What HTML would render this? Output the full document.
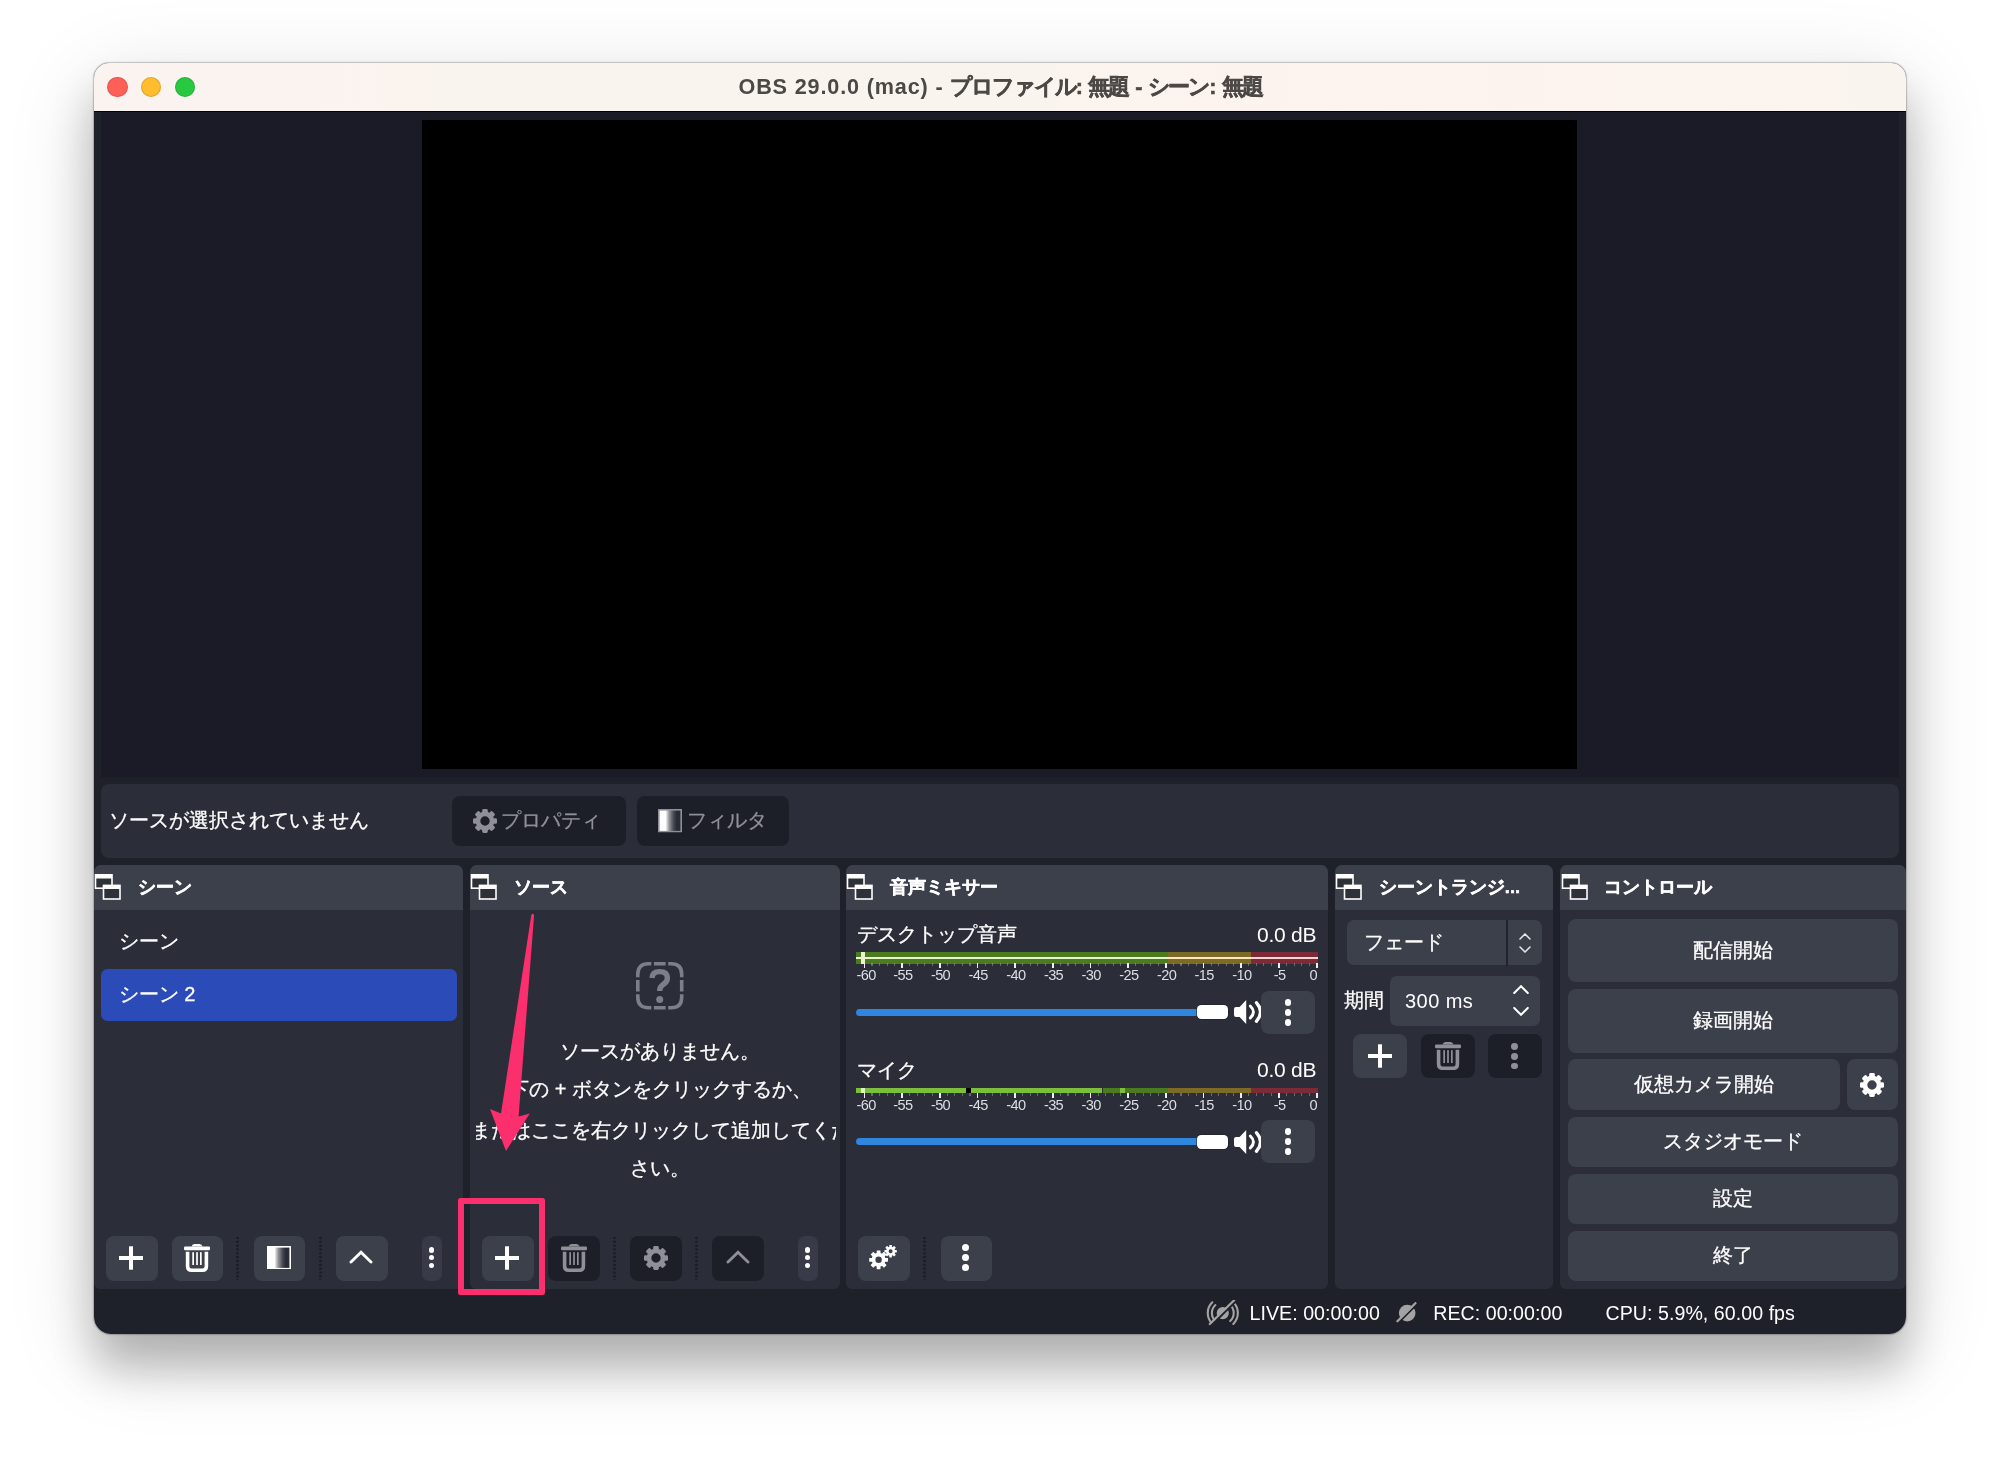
<!DOCTYPE html>
<html lang="ja">
<head>
<meta charset="utf-8">
<title>OBS 29.0.0 (mac)</title>
<style>
*{box-sizing:border-box;margin:0;padding:0}
html,body{width:2000px;height:1459px;overflow:hidden;background:#fff}
body{position:relative;font-family:"Liberation Sans",sans-serif;color:#fffeff;font-size:20px;line-height:1}
#shadow{position:absolute;left:94px;top:63px;width:1812px;height:1271px;border-radius:15px 15px 17px 17px;
 box-shadow:0 0 0 1px rgba(0,0,0,.13),0 0 3px rgba(0,0,0,.2),0 34px 44px 0 rgba(0,0,0,.24),0 20px 90px 0 rgba(0,0,0,.14)}
#win{position:absolute;left:94px;top:63px;width:1812px;height:1271px;border-radius:15px 15px 17px 17px;overflow:hidden;background:#1f212a;will-change:transform}
#c{position:absolute;left:-94px;top:-63px;width:2000px;height:1459px}
#c>*{position:absolute}
#c>div>div{position:absolute}
#titlebar{left:94px;top:63px;width:1812px;height:47.6px;background:linear-gradient(90deg,#fbf3f0,#f9f4ee 45%,#fdf3ef 70%,#faf4ef)}
#tline{left:94px;top:110.5px;width:1812px;height:1.5px;background:#000}
.tl{width:20.4px;height:20.4px;border-radius:50%;top:77px}
#title{left:94px;top:63px;width:1812px;height:47px;line-height:47px;text-align:center;color:#4b4846;font-weight:bold;font-size:21.6px;white-space:nowrap}
#preview{left:100.7px;top:112px;width:1798.6px;height:665.3px;background:#1a1b26}
#canvas{left:422px;top:119.5px;width:1155.4px;height:649.3px;background:#000}
#ctx{left:101px;top:784.3px;width:1798px;height:74.2px;border-radius:8px;background:#2b2e38}
.t{white-space:nowrap}
.btn{background:#3c404b;border-radius:8px}
.dis{background:#1c1e28;border-radius:8px}
.dock{background:#2b2e38;border-radius:7px 7px 6px 6px}
.dock .hd{left:0;top:0;right:0;height:45.2px;background:#3c404b;border-radius:7px 7px 0 0}
.dsep{top:1236.2px;width:3px;height:44px;background:radial-gradient(circle at 50% 50%,#1b1d26 0,#1b1d26 1.05px,transparent 1.55px) 0 0/3px 3.85px repeat-y}
</style>
</head>
<body>
<svg width="0" height="0" style="position:absolute"><symbol id="float" viewBox="0 0 28 27"><rect x="0.7" y="0" width="18.1" height="15" fill="#fff"/><rect x="2.3" y="4.5" width="14.9" height="8.9" fill="#2f3138"/><rect x="8.7" y="10.6" width="18.1" height="15.2" fill="#fff"/><rect x="10.3" y="15" width="14.9" height="9.2" fill="#2f3138"/></symbol><symbol id="plus" viewBox="0 0 24 24"><rect x="0" y="10" width="24" height="4" fill="currentColor"/><rect x="10" y="0.3" width="4" height="23.4" fill="currentColor"/></symbol><symbol id="trash" viewBox="0 0 26 28"><path d="M7.5 2.6 Q8 0 10.5 0 H15.5 Q18 0 18.5 2.6 Z" fill="currentColor"/><rect x="0" y="2.4" width="26" height="3.8" rx="1.2" fill="currentColor"/><path d="M3.6 7.8 V22.2 Q3.6 26.2 7.6 26.2 H18.4 Q22.4 26.2 22.4 22.2 V7.8" fill="none" stroke="currentColor" stroke-width="3.6"/><rect x="8.3" y="8.2" width="1.7" height="12.8" fill="currentColor"/><rect x="12.15" y="8.2" width="1.7" height="12.8" fill="currentColor"/><rect x="16" y="8.2" width="1.7" height="12.8" fill="currentColor"/></symbol><symbol id="filter" viewBox="0 0 24 23.5"><defs><linearGradient id="fg" x1="0" x2="1" y1="0" y2="0"><stop offset="0" stop-color="currentColor"/><stop offset="0.3" stop-color="currentColor"/><stop offset="0.46" stop-color="currentColor" stop-opacity="0.5"/><stop offset="0.66" stop-color="currentColor" stop-opacity="0.14"/><stop offset="0.8" stop-color="currentColor" stop-opacity="0"/></linearGradient></defs><rect x="0.8" y="0.8" width="22.4" height="21.9" fill="#2a2c35"/><rect x="0.8" y="0.8" width="22.4" height="21.9" fill="url(#fg)"/><rect x="0.8" y="0.8" width="22.4" height="21.9" fill="none" stroke="currentColor" stroke-width="1.6"/></symbol><symbol id="chev" viewBox="0 0 24 14"><path d="M2 12 L12 2.3 L22 12" fill="none" stroke="currentColor" stroke-width="2.9" stroke-linecap="round" stroke-linejoin="miter"/></symbol><symbol id="gear" viewBox="0 0 24 24"><circle cx="12" cy="12" r="7.05" fill="none" stroke="currentColor" stroke-width="4.70"/><rect x="9.20" y="0.00" width="5.6" height="3.80" rx="1.4" fill="currentColor" transform="rotate(0.0 12 12)"/><rect x="9.20" y="0.00" width="5.6" height="3.80" rx="1.4" fill="currentColor" transform="rotate(45.0 12 12)"/><rect x="9.20" y="0.00" width="5.6" height="3.80" rx="1.4" fill="currentColor" transform="rotate(90.0 12 12)"/><rect x="9.20" y="0.00" width="5.6" height="3.80" rx="1.4" fill="currentColor" transform="rotate(135.0 12 12)"/><rect x="9.20" y="0.00" width="5.6" height="3.80" rx="1.4" fill="currentColor" transform="rotate(180.0 12 12)"/><rect x="9.20" y="0.00" width="5.6" height="3.80" rx="1.4" fill="currentColor" transform="rotate(225.0 12 12)"/><rect x="9.20" y="0.00" width="5.6" height="3.80" rx="1.4" fill="currentColor" transform="rotate(270.0 12 12)"/><rect x="9.20" y="0.00" width="5.6" height="3.80" rx="1.4" fill="currentColor" transform="rotate(315.0 12 12)"/></symbol><symbol id="gears" viewBox="0 0 30 27"><circle cx="9.6" cy="16.8" r="5.10" fill="none" stroke="currentColor" stroke-width="3.80"/><rect x="7.70" y="7.40" width="3.8" height="3.60" rx="0.4" fill="currentColor" transform="rotate(0.0 9.6 16.8)"/><rect x="7.70" y="7.40" width="3.8" height="3.60" rx="0.4" fill="currentColor" transform="rotate(45.0 9.6 16.8)"/><rect x="7.70" y="7.40" width="3.8" height="3.60" rx="0.4" fill="currentColor" transform="rotate(90.0 9.6 16.8)"/><rect x="7.70" y="7.40" width="3.8" height="3.60" rx="0.4" fill="currentColor" transform="rotate(135.0 9.6 16.8)"/><rect x="7.70" y="7.40" width="3.8" height="3.60" rx="0.4" fill="currentColor" transform="rotate(180.0 9.6 16.8)"/><rect x="7.70" y="7.40" width="3.8" height="3.60" rx="0.4" fill="currentColor" transform="rotate(225.0 9.6 16.8)"/><rect x="7.70" y="7.40" width="3.8" height="3.60" rx="0.4" fill="currentColor" transform="rotate(270.0 9.6 16.8)"/><rect x="7.70" y="7.40" width="3.8" height="3.60" rx="0.4" fill="currentColor" transform="rotate(315.0 9.6 16.8)"/><circle cx="21.6" cy="8.2" r="3.25" fill="none" stroke="currentColor" stroke-width="2.50"/><rect x="20.30" y="2.00" width="2.6" height="2.90" rx="0.3" fill="currentColor" transform="rotate(0.0 21.6 8.2)"/><rect x="20.30" y="2.00" width="2.6" height="2.90" rx="0.3" fill="currentColor" transform="rotate(45.0 21.6 8.2)"/><rect x="20.30" y="2.00" width="2.6" height="2.90" rx="0.3" fill="currentColor" transform="rotate(90.0 21.6 8.2)"/><rect x="20.30" y="2.00" width="2.6" height="2.90" rx="0.3" fill="currentColor" transform="rotate(135.0 21.6 8.2)"/><rect x="20.30" y="2.00" width="2.6" height="2.90" rx="0.3" fill="currentColor" transform="rotate(180.0 21.6 8.2)"/><rect x="20.30" y="2.00" width="2.6" height="2.90" rx="0.3" fill="currentColor" transform="rotate(225.0 21.6 8.2)"/><rect x="20.30" y="2.00" width="2.6" height="2.90" rx="0.3" fill="currentColor" transform="rotate(270.0 21.6 8.2)"/><rect x="20.30" y="2.00" width="2.6" height="2.90" rx="0.3" fill="currentColor" transform="rotate(315.0 21.6 8.2)"/></symbol><symbol id="spk" viewBox="0 0 28 24"><path d="M2 7.1 H5.6 L12.2 0 V23.9 L5.6 16.9 H2 Q0 16.9 0 14.9 V9.1 Q0 7.1 2 7.1 Z" fill="currentColor"/><path d="M16.3 6 Q22.6 12 16.3 18" fill="none" stroke="currentColor" stroke-width="3" stroke-linecap="round"/><path d="M22.4 2.6 Q30.6 12 22.4 21.4" fill="none" stroke="currentColor" stroke-width="3.2" stroke-linecap="round"/></symbol><symbol id="qbox" viewBox="0 0 48 48"><path d="M1.8 15.3 V12.3 Q1.8 1.8 12.3 1.8 H15.3 M32.2 1.8 H35.2 Q45.7 1.8 45.7 12.3 V15.3 M45.7 32.2 V35.2 Q45.7 45.7 35.2 45.7 H32.2 M15.3 45.7 H12.3 Q1.8 45.7 1.8 35.2 V32.2 M17.9 1.8 H29.6 M17.9 45.7 H29.6 M1.8 17.9 V29.6 M45.7 17.9 V29.6" fill="none" stroke="currentColor" stroke-width="3.6"/><path d="M16 16 Q16.3 9.6 23.6 9.6 Q31.4 9.6 31.4 16 Q31.4 19.8 27.2 22.6 Q23.6 25 23.6 29" fill="none" stroke="currentColor" stroke-width="5.4" stroke-linecap="butt"/><circle cx="23.7" cy="37.4" r="3.5" fill="currentColor"/></symbol><symbol id="live" viewBox="0 0 34 26"><circle cx="16.8" cy="13.1" r="6.1" fill="currentColor"/><path d="M6.3 2.3 A15.1 15.1 0 0 0 6.3 23.9 M27.3 2.3 A15.1 15.1 0 0 1 27.3 23.9" fill="none" stroke="currentColor" stroke-width="2.1" stroke-linecap="round"/><path d="M9.4 5.1 A10.9 10.9 0 0 0 9.4 21.1 M24.2 5.1 A10.9 10.9 0 0 1 24.2 21.1" fill="none" stroke="currentColor" stroke-width="2.1" stroke-linecap="round"/><path d="M29.6 1.5 L5.2 25.3" stroke="#1f212a" stroke-width="2.2"/><path d="M28.2 0.2 L3.8 24" stroke="currentColor" stroke-width="2.2" stroke-linecap="round"/></symbol><symbol id="rec" viewBox="0 0 22 22"><circle cx="11.2" cy="11.1" r="8.3" fill="currentColor"/><path d="M20.6 2.6 L2.8 20.4" stroke="#1f212a" stroke-width="2" /><path d="M19.4 1.2 L1.4 19.2" stroke="currentColor" stroke-width="2.3" stroke-linecap="round"/></symbol><symbol id="cup" viewBox="0 0 12 7"><path d="M1 6 L6 1 L11 6" fill="none" stroke="currentColor" stroke-width="1.5" stroke-linecap="round"/></symbol><symbol id="cdn" viewBox="0 0 12 7"><path d="M1 1 L6 6 L11 1" fill="none" stroke="currentColor" stroke-width="1.5" stroke-linecap="round"/></symbol><symbol id="sup" viewBox="0 0 16 9"><path d="M1.2 8 L8 1.2 L14.8 8" fill="none" stroke="currentColor" stroke-width="2" stroke-linecap="round"/></symbol><symbol id="sdn" viewBox="0 0 16 9"><path d="M1.2 1 L8 7.8 L14.8 1" fill="none" stroke="currentColor" stroke-width="2" stroke-linecap="round"/></symbol></svg>
<div id="shadow"></div>
<div id="win"><div id="c">
<div id="titlebar"></div>
<div id="tline"></div>
<div class="tl" style="left:107.3px;background:#fe5f57;box-shadow:inset 0 0 0 1px rgba(0,0,0,.12)"></div>
<div class="tl" style="left:140.9px;background:#febc2e;box-shadow:inset 0 0 0 1px rgba(0,0,0,.12)"></div>
<div class="tl" style="left:174.5px;background:#28c840;box-shadow:inset 0 0 0 1px rgba(0,0,0,.12)"></div>
<div id="title" class="t"><span style="letter-spacing:0.85px">OBS 29.0.0 (mac) - </span><span style="letter-spacing:-2.1px;word-spacing:3.4px;-webkit-text-stroke:0.5px #4b4846">プロファイル: 無題 - シーン: 無題</span></div>
<div id="preview"></div>
<div id="canvas"></div>
<div id="ctx"></div>
<div class="t " style="top:805.0px;height:30.0px;line-height:30.0px;font-size:20px;left:109px;-webkit-text-stroke-width:0.3px;">ソースが選択されていません</div><div class="dis" style="left:451.8px;top:796.2px;width:174.0px;height:49.7px;"></div><svg style="left:473.2px;top:809.3px;color:#8f9097;" width="24" height="24" viewBox="0 0 24 24"><use href="#gear"/></svg><div class="t " style="top:805.0px;height:30.0px;line-height:30.0px;font-size:20px;color:#8f9097;left:501px;-webkit-text-stroke-width:0.3px;">プロパティ</div><div class="dis" style="left:637.0px;top:796.2px;width:152.2px;height:49.7px;"></div><svg style="left:658.0px;top:809.0px;color:#8f9097;" width="24" height="23.5" viewBox="0 0 24 23.5"><use href="#filter"/></svg><div class="t " style="top:805.0px;height:30.0px;line-height:30.0px;font-size:20px;color:#8f9097;left:686.5px;-webkit-text-stroke-width:0.3px;">フィルタ</div><div class="dock" style="left:94.0px;top:865.0px;width:369.4px;height:424.3px;"><div class="hd"></div></div><svg style="left:94.3px;top:873.5px;color:#fff;" width="28" height="27" viewBox="0 0 28 27"><use href="#float"/></svg><div class="t " style="top:873.2px;height:27.5px;line-height:27.5px;font-size:18.3px;font-weight:bold;left:138px;-webkit-text-stroke:0.45px #fffeff;">シーン</div><div class="dock" style="left:470.0px;top:865.0px;width:370.0px;height:424.3px;"><div class="hd"></div></div><svg style="left:470.3px;top:873.5px;color:#fff;" width="28" height="27" viewBox="0 0 28 27"><use href="#float"/></svg><div class="t " style="top:873.2px;height:27.5px;line-height:27.5px;font-size:18.3px;font-weight:bold;left:514px;-webkit-text-stroke:0.45px #fffeff;">ソース</div><div class="dock" style="left:846.0px;top:865.0px;width:482.4px;height:424.3px;"><div class="hd"></div></div><svg style="left:846.3px;top:873.5px;color:#fff;" width="28" height="27" viewBox="0 0 28 27"><use href="#float"/></svg><div class="t " style="top:873.2px;height:27.5px;line-height:27.5px;font-size:18.3px;font-weight:bold;left:890px;-webkit-text-stroke:0.45px #fffeff;">音声ミキサー</div><div class="dock" style="left:1334.8px;top:865.0px;width:218.7px;height:424.3px;"><div class="hd"></div></div><svg style="left:1335.1px;top:873.5px;color:#fff;" width="28" height="27" viewBox="0 0 28 27"><use href="#float"/></svg><div class="t " style="top:873.2px;height:27.5px;line-height:27.5px;font-size:18.3px;font-weight:bold;left:1378.8px;-webkit-text-stroke:0.45px #fffeff;">シーントランジ...</div><div class="dock" style="left:1560.2px;top:865.0px;width:345.8px;height:424.3px;"><div class="hd"></div></div><svg style="left:1560.5px;top:873.5px;color:#fff;" width="28" height="27" viewBox="0 0 28 27"><use href="#float"/></svg><div class="t " style="top:873.2px;height:27.5px;line-height:27.5px;font-size:18.3px;font-weight:bold;left:1604.2px;-webkit-text-stroke:0.45px #fffeff;">コントロール</div><div class="t " style="top:926.0px;height:30.0px;line-height:30.0px;font-size:20px;left:118.7px;-webkit-text-stroke-width:0.3px;">シーン</div><div class="" style="left:100.7px;top:968.8px;width:356.3px;height:52.1px;background:#2b4cb8;border-radius:6.5px"></div><div class="t " style="top:978.8px;height:30.0px;line-height:30.0px;font-size:20px;left:118.7px;-webkit-text-stroke-width:0.3px;">シーン 2</div><div class="btn" style="left:105.8px;top:1235.7px;width:51.8px;height:45.4px;"></div><svg style="left:119.0px;top:1245.5px;color:#fff;" width="24" height="24" viewBox="0 0 24 24"><use href="#plus"/></svg><div class="btn" style="left:171.5px;top:1235.7px;width:51.2px;height:45.4px;"></div><svg style="left:184.3px;top:1243.5px;color:#fff;" width="26" height="28" viewBox="0 0 26 28"><use href="#trash"/></svg><div class="dsep" style="left:236.2px"></div><div class="btn" style="left:253.6px;top:1235.7px;width:51.7px;height:45.4px;"></div><svg style="left:266.8px;top:1245.8px;color:#fff;" width="24" height="23.5" viewBox="0 0 24 23.5"><use href="#filter"/></svg><div class="dsep" style="left:318.5px"></div><div class="btn" style="left:336.0px;top:1235.7px;width:51.8px;height:45.4px;"></div><svg style="left:349.0px;top:1250.3px;color:#fff;" width="24" height="14" viewBox="0 0 24 14"><use href="#chev"/></svg><div class="btn" style="left:421.5px;top:1235.7px;width:20.0px;height:45.4px;background:#383b47;border-radius:7px"></div><div style="left:428.7px;top:1247.2px;width:5.6px;height:5.6px;border-radius:50%;background:#fff"></div><div style="left:428.7px;top:1254.9px;width:5.6px;height:5.6px;border-radius:50%;background:#fff"></div><div style="left:428.7px;top:1262.5px;width:5.6px;height:5.6px;border-radius:50%;background:#fff"></div><svg style="left:636.0px;top:961.7px;color:#7c7e8a;" width="48" height="48" viewBox="0 0 48 48"><use href="#qbox"/></svg><div class="t " style="top:1036.0px;height:30.0px;line-height:30.0px;font-size:20px;left:60.0px;width:1200px;text-align:center;-webkit-text-stroke-width:0.3px;">ソースがありません。</div><div class="t " style="top:1074.0px;height:30.0px;line-height:30.0px;font-size:20px;left:60.5px;width:1200px;text-align:center;word-spacing:0.3px;-webkit-text-stroke-width:0.3px;">下の + ボタンをクリックするか、</div><div style="left:476px;top:1110px;width:359.5px;height:42px;overflow:hidden"><div class="t" style="position:absolute;left:-415.5px;width:1200px;text-align:center;top:5px;height:30px;line-height:30px;-webkit-text-stroke-width:0.3px">またはここを右クリックして追加してくだ</div></div><div class="t " style="top:1153.0px;height:30.0px;line-height:30.0px;font-size:20px;left:60.0px;width:1200px;text-align:center;-webkit-text-stroke-width:0.3px;">さい。</div><div class="btn" style="left:482.3px;top:1235.7px;width:51.5px;height:45.4px;"></div><svg style="left:495.2px;top:1245.5px;color:#fff;" width="24" height="24" viewBox="0 0 24 24"><use href="#plus"/></svg><div class="dis" style="left:548.0px;top:1235.7px;width:51.6px;height:45.4px;"></div><svg style="left:560.8px;top:1243.5px;color:#8f9097;" width="26" height="28" viewBox="0 0 26 28"><use href="#trash"/></svg><div class="dsep" style="left:612.5px"></div><div class="dis" style="left:630.0px;top:1235.7px;width:51.6px;height:45.4px;"></div><svg style="left:643.8px;top:1246.4px;color:#8f9097;" width="24" height="24" viewBox="0 0 24 24"><use href="#gear"/></svg><div class="dsep" style="left:694.5px"></div><div class="dis" style="left:712.0px;top:1235.7px;width:52.0px;height:45.4px;"></div><svg style="left:726.0px;top:1250.3px;color:#8f9097;" width="24" height="14" viewBox="0 0 24 14"><use href="#chev"/></svg><div class="btn" style="left:797.5px;top:1235.7px;width:20.5px;height:45.4px;background:#383b47;border-radius:7px"></div><div style="left:804.9px;top:1247.2px;width:5.6px;height:5.6px;border-radius:50%;background:#fff"></div><div style="left:804.9px;top:1254.9px;width:5.6px;height:5.6px;border-radius:50%;background:#fff"></div><div style="left:804.9px;top:1262.5px;width:5.6px;height:5.6px;border-radius:50%;background:#fff"></div><div class="t " style="top:919.0px;height:30.0px;line-height:30.0px;font-size:20px;left:857px;-webkit-text-stroke-width:0.3px;">デスクトップ音声</div><div class="t " style="top:918.9px;height:31.5px;line-height:31.5px;font-size:21px;right:683.7px;text-align:right;letter-spacing:-0.25px;">0.0 dB</div><div class="" style="left:856.2px;top:952.0px;width:311.6px;height:11.7px;background:#4c7a1e"></div><div class="" style="left:1167.8px;top:952.0px;width:83.5px;height:11.7px;background:#7d6a24"></div><div class="" style="left:1251.3px;top:952.0px;width:67.1px;height:11.7px;background:#7c2b36"></div><div class="" style="left:856.2px;top:956.8px;width:311.6px;height:2.4px;background:#eaf5cc"></div><div class="" style="left:1167.8px;top:956.8px;width:83.5px;height:2.4px;background:#fbe8c2"></div><div class="" style="left:1251.3px;top:956.8px;width:67.1px;height:2.4px;background:#fbd2d6"></div><div class="" style="left:861.0px;top:952.0px;width:4.0px;height:11.7px;background:#e9f3d3"></div><div style="left:863.6px;top:963.4px;width:1.8px;height:4.5px;background:#eeeff2"></div><div style="left:871.4px;top:962.9px;width:1.2px;height:3.4px;background:rgba(228,229,232,.33)"></div><div style="left:879.0px;top:962.9px;width:1.2px;height:3.4px;background:rgba(228,229,232,.33)"></div><div style="left:886.5px;top:962.9px;width:1.2px;height:3.4px;background:rgba(228,229,232,.33)"></div><div style="left:894.0px;top:962.9px;width:1.2px;height:3.4px;background:rgba(228,229,232,.33)"></div><div style="left:901.3px;top:963.4px;width:1.8px;height:4.5px;background:#eeeff2"></div><div style="left:909.1px;top:962.9px;width:1.2px;height:3.4px;background:rgba(228,229,232,.33)"></div><div style="left:916.6px;top:962.9px;width:1.2px;height:3.4px;background:rgba(228,229,232,.33)"></div><div style="left:924.2px;top:962.9px;width:1.2px;height:3.4px;background:rgba(228,229,232,.33)"></div><div style="left:931.7px;top:962.9px;width:1.2px;height:3.4px;background:rgba(228,229,232,.33)"></div><div style="left:939.0px;top:963.4px;width:1.8px;height:4.5px;background:#eeeff2"></div><div style="left:946.8px;top:962.9px;width:1.2px;height:3.4px;background:rgba(228,229,232,.33)"></div><div style="left:954.3px;top:962.9px;width:1.2px;height:3.4px;background:rgba(228,229,232,.33)"></div><div style="left:961.9px;top:962.9px;width:1.2px;height:3.4px;background:rgba(228,229,232,.33)"></div><div style="left:969.4px;top:962.9px;width:1.2px;height:3.4px;background:rgba(228,229,232,.33)"></div><div style="left:976.6px;top:963.4px;width:1.8px;height:4.5px;background:#eeeff2"></div><div style="left:984.5px;top:962.9px;width:1.2px;height:3.4px;background:rgba(228,229,232,.33)"></div><div style="left:992.0px;top:962.9px;width:1.2px;height:3.4px;background:rgba(228,229,232,.33)"></div><div style="left:999.5px;top:962.9px;width:1.2px;height:3.4px;background:rgba(228,229,232,.33)"></div><div style="left:1007.1px;top:962.9px;width:1.2px;height:3.4px;background:rgba(228,229,232,.33)"></div><div style="left:1014.3px;top:963.4px;width:1.8px;height:4.5px;background:#eeeff2"></div><div style="left:1022.2px;top:962.9px;width:1.2px;height:3.4px;background:rgba(228,229,232,.33)"></div><div style="left:1029.7px;top:962.9px;width:1.2px;height:3.4px;background:rgba(228,229,232,.33)"></div><div style="left:1037.2px;top:962.9px;width:1.2px;height:3.4px;background:rgba(228,229,232,.33)"></div><div style="left:1044.8px;top:962.9px;width:1.2px;height:3.4px;background:rgba(228,229,232,.33)"></div><div style="left:1052.0px;top:963.4px;width:1.8px;height:4.5px;background:#eeeff2"></div><div style="left:1059.8px;top:962.9px;width:1.2px;height:3.4px;background:rgba(228,229,232,.33)"></div><div style="left:1067.4px;top:962.9px;width:1.2px;height:3.4px;background:rgba(228,229,232,.33)"></div><div style="left:1074.9px;top:962.9px;width:1.2px;height:3.4px;background:rgba(228,229,232,.33)"></div><div style="left:1082.5px;top:962.9px;width:1.2px;height:3.4px;background:rgba(228,229,232,.33)"></div><div style="left:1089.7px;top:963.4px;width:1.8px;height:4.5px;background:#eeeff2"></div><div style="left:1097.5px;top:962.9px;width:1.2px;height:3.4px;background:rgba(228,229,232,.33)"></div><div style="left:1105.1px;top:962.9px;width:1.2px;height:3.4px;background:rgba(228,229,232,.33)"></div><div style="left:1112.6px;top:962.9px;width:1.2px;height:3.4px;background:rgba(228,229,232,.33)"></div><div style="left:1120.1px;top:962.9px;width:1.2px;height:3.4px;background:rgba(228,229,232,.33)"></div><div style="left:1127.4px;top:963.4px;width:1.8px;height:4.5px;background:#eeeff2"></div><div style="left:1135.2px;top:962.9px;width:1.2px;height:3.4px;background:rgba(228,229,232,.33)"></div><div style="left:1142.7px;top:962.9px;width:1.2px;height:3.4px;background:rgba(228,229,232,.33)"></div><div style="left:1150.3px;top:962.9px;width:1.2px;height:3.4px;background:rgba(228,229,232,.33)"></div><div style="left:1157.8px;top:962.9px;width:1.2px;height:3.4px;background:rgba(228,229,232,.33)"></div><div style="left:1165.1px;top:963.4px;width:1.8px;height:4.5px;background:#eeeff2"></div><div style="left:1172.9px;top:962.9px;width:1.2px;height:3.4px;background:rgba(228,229,232,.33)"></div><div style="left:1180.4px;top:962.9px;width:1.2px;height:3.4px;background:rgba(228,229,232,.33)"></div><div style="left:1188.0px;top:962.9px;width:1.2px;height:3.4px;background:rgba(228,229,232,.33)"></div><div style="left:1195.5px;top:962.9px;width:1.2px;height:3.4px;background:rgba(228,229,232,.33)"></div><div style="left:1202.7px;top:963.4px;width:1.8px;height:4.5px;background:#eeeff2"></div><div style="left:1210.6px;top:962.9px;width:1.2px;height:3.4px;background:rgba(228,229,232,.33)"></div><div style="left:1218.1px;top:962.9px;width:1.2px;height:3.4px;background:rgba(228,229,232,.33)"></div><div style="left:1225.7px;top:962.9px;width:1.2px;height:3.4px;background:rgba(228,229,232,.33)"></div><div style="left:1233.2px;top:962.9px;width:1.2px;height:3.4px;background:rgba(228,229,232,.33)"></div><div style="left:1240.4px;top:963.4px;width:1.8px;height:4.5px;background:#eeeff2"></div><div style="left:1248.3px;top:962.9px;width:1.2px;height:3.4px;background:rgba(228,229,232,.33)"></div><div style="left:1255.8px;top:962.9px;width:1.2px;height:3.4px;background:rgba(228,229,232,.33)"></div><div style="left:1263.3px;top:962.9px;width:1.2px;height:3.4px;background:rgba(228,229,232,.33)"></div><div style="left:1270.9px;top:962.9px;width:1.2px;height:3.4px;background:rgba(228,229,232,.33)"></div><div style="left:1278.1px;top:963.4px;width:1.8px;height:4.5px;background:#eeeff2"></div><div style="left:1286.0px;top:962.9px;width:1.2px;height:3.4px;background:rgba(228,229,232,.33)"></div><div style="left:1293.5px;top:962.9px;width:1.2px;height:3.4px;background:rgba(228,229,232,.33)"></div><div style="left:1301.0px;top:962.9px;width:1.2px;height:3.4px;background:rgba(228,229,232,.33)"></div><div style="left:1308.6px;top:962.9px;width:1.2px;height:3.4px;background:rgba(228,229,232,.33)"></div><div style="left:1315.8px;top:963.4px;width:1.8px;height:4.5px;background:#eeeff2"></div><div class="t " style="top:965.0px;height:21.9px;line-height:21.9px;font-size:14.6px;color:#dcdde2;left:856.6px;letter-spacing:-0.65px;">-60</div><div class="t " style="top:965.0px;height:21.9px;line-height:21.9px;font-size:14.6px;color:#dcdde2;left:302.8px;width:1200px;text-align:center;letter-spacing:-0.65px;">-55</div><div class="t " style="top:965.0px;height:21.9px;line-height:21.9px;font-size:14.6px;color:#dcdde2;left:340.5px;width:1200px;text-align:center;letter-spacing:-0.65px;">-50</div><div class="t " style="top:965.0px;height:21.9px;line-height:21.9px;font-size:14.6px;color:#dcdde2;left:378.1px;width:1200px;text-align:center;letter-spacing:-0.65px;">-45</div><div class="t " style="top:965.0px;height:21.9px;line-height:21.9px;font-size:14.6px;color:#dcdde2;left:415.8px;width:1200px;text-align:center;letter-spacing:-0.65px;">-40</div><div class="t " style="top:965.0px;height:21.9px;line-height:21.9px;font-size:14.6px;color:#dcdde2;left:453.5px;width:1200px;text-align:center;letter-spacing:-0.65px;">-35</div><div class="t " style="top:965.0px;height:21.9px;line-height:21.9px;font-size:14.6px;color:#dcdde2;left:491.2px;width:1200px;text-align:center;letter-spacing:-0.65px;">-30</div><div class="t " style="top:965.0px;height:21.9px;line-height:21.9px;font-size:14.6px;color:#dcdde2;left:528.9px;width:1200px;text-align:center;letter-spacing:-0.65px;">-25</div><div class="t " style="top:965.0px;height:21.9px;line-height:21.9px;font-size:14.6px;color:#dcdde2;left:566.6px;width:1200px;text-align:center;letter-spacing:-0.65px;">-20</div><div class="t " style="top:965.0px;height:21.9px;line-height:21.9px;font-size:14.6px;color:#dcdde2;left:604.2px;width:1200px;text-align:center;letter-spacing:-0.65px;">-15</div><div class="t " style="top:965.0px;height:21.9px;line-height:21.9px;font-size:14.6px;color:#dcdde2;left:641.9px;width:1200px;text-align:center;letter-spacing:-0.65px;">-10</div><div class="t " style="top:965.0px;height:21.9px;line-height:21.9px;font-size:14.6px;color:#dcdde2;left:679.6px;width:1200px;text-align:center;letter-spacing:-0.65px;">-5</div><div class="t " style="top:965.0px;height:21.9px;line-height:21.9px;font-size:14.6px;color:#dcdde2;right:682.4px;text-align:right;">0</div><div class="" style="left:856.2px;top:1008.8px;width:353.8px;height:7.3px;background:#2f86de;border-radius:3.65px"></div><div class="" style="left:1196.7px;top:1005.3px;width:31.5px;height:14.2px;background:#fff;border-radius:4.2px;box-shadow:0 0 0 1px rgba(31,33,42,.55)"></div><svg style="left:1233.9px;top:1000.2px;color:#fff;" width="28" height="24" viewBox="0 0 28 24"><use href="#spk"/></svg><div class="btn" style="left:1260.8px;top:990.8px;width:53.9px;height:43.1px;"></div><div style="left:1284.6px;top:999.0px;width:6.8px;height:6.8px;border-radius:50%;background:#fff"></div><div style="left:1284.6px;top:1009.0px;width:6.8px;height:6.8px;border-radius:50%;background:#fff"></div><div style="left:1284.6px;top:1019.0px;width:6.8px;height:6.8px;border-radius:50%;background:#fff"></div><div class="t " style="top:1054.5px;height:30.0px;line-height:30.0px;font-size:20px;left:857px;-webkit-text-stroke-width:0.3px;">マイク</div><div class="t " style="top:1054.3px;height:31.5px;line-height:31.5px;font-size:21px;right:683.7px;text-align:right;letter-spacing:-0.25px;">0.0 dB</div><div class="" style="left:856.2px;top:1088.0px;width:246.3px;height:5.3px;background:#7cbf3a"></div><div class="" style="left:1102.5px;top:1088.0px;width:65.3px;height:5.3px;background:#4c7a1e"></div><div class="" style="left:1120.0px;top:1088.0px;width:5.0px;height:5.3px;background:#7cbf3a"></div><div class="" style="left:1167.8px;top:1088.0px;width:83.5px;height:5.3px;background:#7d6a24"></div><div class="" style="left:1251.3px;top:1088.0px;width:67.1px;height:5.3px;background:#7c2b36"></div><div class="" style="left:966.2px;top:1088.0px;width:4.4px;height:5.3px;background:#000"></div><div class="" style="left:861.0px;top:1088.0px;width:4.0px;height:5.3px;background:#def1c0"></div><div style="left:863.6px;top:1093.0px;width:1.8px;height:4.5px;background:#eeeff2"></div><div style="left:871.4px;top:1092.5px;width:1.2px;height:3.4px;background:rgba(228,229,232,.33)"></div><div style="left:879.0px;top:1092.5px;width:1.2px;height:3.4px;background:rgba(228,229,232,.33)"></div><div style="left:886.5px;top:1092.5px;width:1.2px;height:3.4px;background:rgba(228,229,232,.33)"></div><div style="left:894.0px;top:1092.5px;width:1.2px;height:3.4px;background:rgba(228,229,232,.33)"></div><div style="left:901.3px;top:1093.0px;width:1.8px;height:4.5px;background:#eeeff2"></div><div style="left:909.1px;top:1092.5px;width:1.2px;height:3.4px;background:rgba(228,229,232,.33)"></div><div style="left:916.6px;top:1092.5px;width:1.2px;height:3.4px;background:rgba(228,229,232,.33)"></div><div style="left:924.2px;top:1092.5px;width:1.2px;height:3.4px;background:rgba(228,229,232,.33)"></div><div style="left:931.7px;top:1092.5px;width:1.2px;height:3.4px;background:rgba(228,229,232,.33)"></div><div style="left:939.0px;top:1093.0px;width:1.8px;height:4.5px;background:#eeeff2"></div><div style="left:946.8px;top:1092.5px;width:1.2px;height:3.4px;background:rgba(228,229,232,.33)"></div><div style="left:954.3px;top:1092.5px;width:1.2px;height:3.4px;background:rgba(228,229,232,.33)"></div><div style="left:961.9px;top:1092.5px;width:1.2px;height:3.4px;background:rgba(228,229,232,.33)"></div><div style="left:969.4px;top:1092.5px;width:1.2px;height:3.4px;background:rgba(228,229,232,.33)"></div><div style="left:976.6px;top:1093.0px;width:1.8px;height:4.5px;background:#eeeff2"></div><div style="left:984.5px;top:1092.5px;width:1.2px;height:3.4px;background:rgba(228,229,232,.33)"></div><div style="left:992.0px;top:1092.5px;width:1.2px;height:3.4px;background:rgba(228,229,232,.33)"></div><div style="left:999.5px;top:1092.5px;width:1.2px;height:3.4px;background:rgba(228,229,232,.33)"></div><div style="left:1007.1px;top:1092.5px;width:1.2px;height:3.4px;background:rgba(228,229,232,.33)"></div><div style="left:1014.3px;top:1093.0px;width:1.8px;height:4.5px;background:#eeeff2"></div><div style="left:1022.2px;top:1092.5px;width:1.2px;height:3.4px;background:rgba(228,229,232,.33)"></div><div style="left:1029.7px;top:1092.5px;width:1.2px;height:3.4px;background:rgba(228,229,232,.33)"></div><div style="left:1037.2px;top:1092.5px;width:1.2px;height:3.4px;background:rgba(228,229,232,.33)"></div><div style="left:1044.8px;top:1092.5px;width:1.2px;height:3.4px;background:rgba(228,229,232,.33)"></div><div style="left:1052.0px;top:1093.0px;width:1.8px;height:4.5px;background:#eeeff2"></div><div style="left:1059.8px;top:1092.5px;width:1.2px;height:3.4px;background:rgba(228,229,232,.33)"></div><div style="left:1067.4px;top:1092.5px;width:1.2px;height:3.4px;background:rgba(228,229,232,.33)"></div><div style="left:1074.9px;top:1092.5px;width:1.2px;height:3.4px;background:rgba(228,229,232,.33)"></div><div style="left:1082.5px;top:1092.5px;width:1.2px;height:3.4px;background:rgba(228,229,232,.33)"></div><div style="left:1089.7px;top:1093.0px;width:1.8px;height:4.5px;background:#eeeff2"></div><div style="left:1097.5px;top:1092.5px;width:1.2px;height:3.4px;background:rgba(228,229,232,.33)"></div><div style="left:1105.1px;top:1092.5px;width:1.2px;height:3.4px;background:rgba(228,229,232,.33)"></div><div style="left:1112.6px;top:1092.5px;width:1.2px;height:3.4px;background:rgba(228,229,232,.33)"></div><div style="left:1120.1px;top:1092.5px;width:1.2px;height:3.4px;background:rgba(228,229,232,.33)"></div><div style="left:1127.4px;top:1093.0px;width:1.8px;height:4.5px;background:#eeeff2"></div><div style="left:1135.2px;top:1092.5px;width:1.2px;height:3.4px;background:rgba(228,229,232,.33)"></div><div style="left:1142.7px;top:1092.5px;width:1.2px;height:3.4px;background:rgba(228,229,232,.33)"></div><div style="left:1150.3px;top:1092.5px;width:1.2px;height:3.4px;background:rgba(228,229,232,.33)"></div><div style="left:1157.8px;top:1092.5px;width:1.2px;height:3.4px;background:rgba(228,229,232,.33)"></div><div style="left:1165.1px;top:1093.0px;width:1.8px;height:4.5px;background:#eeeff2"></div><div style="left:1172.9px;top:1092.5px;width:1.2px;height:3.4px;background:rgba(228,229,232,.33)"></div><div style="left:1180.4px;top:1092.5px;width:1.2px;height:3.4px;background:rgba(228,229,232,.33)"></div><div style="left:1188.0px;top:1092.5px;width:1.2px;height:3.4px;background:rgba(228,229,232,.33)"></div><div style="left:1195.5px;top:1092.5px;width:1.2px;height:3.4px;background:rgba(228,229,232,.33)"></div><div style="left:1202.7px;top:1093.0px;width:1.8px;height:4.5px;background:#eeeff2"></div><div style="left:1210.6px;top:1092.5px;width:1.2px;height:3.4px;background:rgba(228,229,232,.33)"></div><div style="left:1218.1px;top:1092.5px;width:1.2px;height:3.4px;background:rgba(228,229,232,.33)"></div><div style="left:1225.7px;top:1092.5px;width:1.2px;height:3.4px;background:rgba(228,229,232,.33)"></div><div style="left:1233.2px;top:1092.5px;width:1.2px;height:3.4px;background:rgba(228,229,232,.33)"></div><div style="left:1240.4px;top:1093.0px;width:1.8px;height:4.5px;background:#eeeff2"></div><div style="left:1248.3px;top:1092.5px;width:1.2px;height:3.4px;background:rgba(228,229,232,.33)"></div><div style="left:1255.8px;top:1092.5px;width:1.2px;height:3.4px;background:rgba(228,229,232,.33)"></div><div style="left:1263.3px;top:1092.5px;width:1.2px;height:3.4px;background:rgba(228,229,232,.33)"></div><div style="left:1270.9px;top:1092.5px;width:1.2px;height:3.4px;background:rgba(228,229,232,.33)"></div><div style="left:1278.1px;top:1093.0px;width:1.8px;height:4.5px;background:#eeeff2"></div><div style="left:1286.0px;top:1092.5px;width:1.2px;height:3.4px;background:rgba(228,229,232,.33)"></div><div style="left:1293.5px;top:1092.5px;width:1.2px;height:3.4px;background:rgba(228,229,232,.33)"></div><div style="left:1301.0px;top:1092.5px;width:1.2px;height:3.4px;background:rgba(228,229,232,.33)"></div><div style="left:1308.6px;top:1092.5px;width:1.2px;height:3.4px;background:rgba(228,229,232,.33)"></div><div style="left:1315.8px;top:1093.0px;width:1.8px;height:4.5px;background:#eeeff2"></div><div class="t " style="top:1094.6px;height:21.9px;line-height:21.9px;font-size:14.6px;color:#dcdde2;left:856.6px;letter-spacing:-0.65px;">-60</div><div class="t " style="top:1094.6px;height:21.9px;line-height:21.9px;font-size:14.6px;color:#dcdde2;left:302.8px;width:1200px;text-align:center;letter-spacing:-0.65px;">-55</div><div class="t " style="top:1094.6px;height:21.9px;line-height:21.9px;font-size:14.6px;color:#dcdde2;left:340.5px;width:1200px;text-align:center;letter-spacing:-0.65px;">-50</div><div class="t " style="top:1094.6px;height:21.9px;line-height:21.9px;font-size:14.6px;color:#dcdde2;left:378.1px;width:1200px;text-align:center;letter-spacing:-0.65px;">-45</div><div class="t " style="top:1094.6px;height:21.9px;line-height:21.9px;font-size:14.6px;color:#dcdde2;left:415.8px;width:1200px;text-align:center;letter-spacing:-0.65px;">-40</div><div class="t " style="top:1094.6px;height:21.9px;line-height:21.9px;font-size:14.6px;color:#dcdde2;left:453.5px;width:1200px;text-align:center;letter-spacing:-0.65px;">-35</div><div class="t " style="top:1094.6px;height:21.9px;line-height:21.9px;font-size:14.6px;color:#dcdde2;left:491.2px;width:1200px;text-align:center;letter-spacing:-0.65px;">-30</div><div class="t " style="top:1094.6px;height:21.9px;line-height:21.9px;font-size:14.6px;color:#dcdde2;left:528.9px;width:1200px;text-align:center;letter-spacing:-0.65px;">-25</div><div class="t " style="top:1094.6px;height:21.9px;line-height:21.9px;font-size:14.6px;color:#dcdde2;left:566.6px;width:1200px;text-align:center;letter-spacing:-0.65px;">-20</div><div class="t " style="top:1094.6px;height:21.9px;line-height:21.9px;font-size:14.6px;color:#dcdde2;left:604.2px;width:1200px;text-align:center;letter-spacing:-0.65px;">-15</div><div class="t " style="top:1094.6px;height:21.9px;line-height:21.9px;font-size:14.6px;color:#dcdde2;left:641.9px;width:1200px;text-align:center;letter-spacing:-0.65px;">-10</div><div class="t " style="top:1094.6px;height:21.9px;line-height:21.9px;font-size:14.6px;color:#dcdde2;left:679.6px;width:1200px;text-align:center;letter-spacing:-0.65px;">-5</div><div class="t " style="top:1094.6px;height:21.9px;line-height:21.9px;font-size:14.6px;color:#dcdde2;right:682.4px;text-align:right;">0</div><div class="" style="left:856.2px;top:1138.2px;width:353.8px;height:7.3px;background:#2f86de;border-radius:3.65px"></div><div class="" style="left:1196.7px;top:1134.8px;width:31.5px;height:14.2px;background:#fff;border-radius:4.2px;box-shadow:0 0 0 1px rgba(31,33,42,.55)"></div><svg style="left:1233.9px;top:1129.7px;color:#fff;" width="28" height="24" viewBox="0 0 28 24"><use href="#spk"/></svg><div class="btn" style="left:1260.8px;top:1120.4px;width:53.9px;height:42.8px;"></div><div style="left:1284.6px;top:1128.4px;width:6.8px;height:6.8px;border-radius:50%;background:#fff"></div><div style="left:1284.6px;top:1138.4px;width:6.8px;height:6.8px;border-radius:50%;background:#fff"></div><div style="left:1284.6px;top:1148.4px;width:6.8px;height:6.8px;border-radius:50%;background:#fff"></div><div class="btn" style="left:858.2px;top:1235.7px;width:51.6px;height:45.4px;"></div><svg style="left:869.4px;top:1243.4px;color:#fff;" width="30" height="27" viewBox="0 0 30 27"><use href="#gears"/></svg><div class="dsep" style="left:922.7px"></div><div class="btn" style="left:940.6px;top:1235.7px;width:51.4px;height:45.4px;"></div><div style="left:962.0px;top:1244.0px;width:7.2px;height:7.2px;border-radius:50%;background:#fff"></div><div style="left:962.0px;top:1253.9px;width:7.2px;height:7.2px;border-radius:50%;background:#fff"></div><div style="left:962.0px;top:1263.8px;width:7.2px;height:7.2px;border-radius:50%;background:#fff"></div><div class="btn" style="left:1346.6px;top:919.8px;width:195.0px;height:45.6px;border-radius:7px"></div><div class="" style="left:1506.3px;top:919.8px;width:1.5px;height:46.6px;background:#22242d"></div><div class="t " style="top:926.5px;height:30.0px;line-height:30.0px;font-size:20px;left:1364px;-webkit-text-stroke-width:0.3px;">フェード</div><svg style="left:1518.9px;top:932.6px;color:#e8e8ea;" width="12" height="7" viewBox="0 0 12 7"><use href="#cup"/></svg><svg style="left:1518.9px;top:945.8px;color:#e8e8ea;" width="12" height="7" viewBox="0 0 12 7"><use href="#cdn"/></svg><div class="t " style="top:985.0px;height:30.0px;line-height:30.0px;font-size:20px;left:1343.5px;-webkit-text-stroke-width:0.3px;">期間</div><div class="btn" style="left:1390.4px;top:975.8px;width:149.6px;height:50.3px;border-radius:7px"></div><div class="t " style="top:986.0px;height:30.0px;line-height:30.0px;font-size:20px;left:1405px;letter-spacing:0.45px;">300 ms</div><svg style="left:1512.6px;top:985.3px;color:#fff;" width="16" height="9" viewBox="0 0 16 9"><use href="#sup"/></svg><svg style="left:1512.6px;top:1007.2px;color:#fff;" width="16" height="9" viewBox="0 0 16 9"><use href="#sdn"/></svg><div class="btn" style="left:1353.4px;top:1034.3px;width:53.8px;height:43.7px;"></div><svg style="left:1368.3px;top:1044.2px;color:#fff;" width="24" height="24" viewBox="0 0 24 24"><use href="#plus"/></svg><div class="dis" style="left:1420.7px;top:1034.3px;width:53.9px;height:43.7px;"></div><svg style="left:1434.6px;top:1042.2px;color:#8f9097;" width="26" height="28" viewBox="0 0 26 28"><use href="#trash"/></svg><div class="dis" style="left:1488.0px;top:1034.3px;width:53.7px;height:43.7px;"></div><div style="left:1511.4px;top:1042.9px;width:6.8px;height:6.8px;border-radius:50%;background:#8f9097"></div><div style="left:1511.4px;top:1052.8px;width:6.8px;height:6.8px;border-radius:50%;background:#8f9097"></div><div style="left:1511.4px;top:1062.7px;width:6.8px;height:6.8px;border-radius:50%;background:#8f9097"></div><div class="btn" style="left:1568.3px;top:918.8px;width:329.3px;height:63.3px;"></div><div class="t " style="top:934.8px;height:30.0px;line-height:30.0px;font-size:20px;left:1132.9px;width:1200px;text-align:center;-webkit-text-stroke-width:0.3px;">配信開始</div><div class="btn" style="left:1568.3px;top:989.1px;width:329.3px;height:63.7px;"></div><div class="t " style="top:1005.2px;height:30.0px;line-height:30.0px;font-size:20px;left:1132.9px;width:1200px;text-align:center;-webkit-text-stroke-width:0.3px;">録画開始</div><div class="btn" style="left:1568.3px;top:1059.4px;width:272.0px;height:50.5px;"></div><div class="t " style="top:1069.0px;height:30.0px;line-height:30.0px;font-size:20px;left:1104.3px;width:1200px;text-align:center;-webkit-text-stroke-width:0.3px;">仮想カメラ開始</div><div class="btn" style="left:1847.3px;top:1059.4px;width:50.3px;height:50.5px;"></div><svg style="left:1860.4px;top:1072.6px;color:#fff;" width="24" height="24" viewBox="0 0 24 24"><use href="#gear"/></svg><div class="btn" style="left:1568.3px;top:1116.5px;width:329.3px;height:50.6px;"></div><div class="t " style="top:1126.1px;height:30.0px;line-height:30.0px;font-size:20px;left:1132.9px;width:1200px;text-align:center;-webkit-text-stroke-width:0.3px;">スタジオモード</div><div class="btn" style="left:1568.3px;top:1173.7px;width:329.3px;height:50.4px;"></div><div class="t " style="top:1183.2px;height:30.0px;line-height:30.0px;font-size:20px;left:1132.9px;width:1200px;text-align:center;-webkit-text-stroke-width:0.3px;">設定</div><div class="btn" style="left:1568.3px;top:1230.9px;width:329.3px;height:50.1px;"></div><div class="t " style="top:1240.2px;height:30.0px;line-height:30.0px;font-size:20px;left:1132.9px;width:1200px;text-align:center;-webkit-text-stroke-width:0.3px;">終了</div><svg style="left:1206.0px;top:1300.0px;color:#a3a3a3;" width="34" height="26" viewBox="0 0 34 26"><use href="#live"/></svg><div class="t " style="top:1298.5px;height:29.4px;line-height:29.4px;font-size:19.6px;left:1249.5px;letter-spacing:0.05px;">LIVE: 00:00:00</div><svg style="left:1396.0px;top:1302.0px;color:#a3a3a3;" width="22" height="22" viewBox="0 0 22 22"><use href="#rec"/></svg><div class="t " style="top:1298.5px;height:29.4px;line-height:29.4px;font-size:19.6px;left:1433.2px;letter-spacing:0.05px;">REC: 00:00:00</div><div class="t " style="top:1298.5px;height:29.4px;line-height:29.4px;font-size:19.6px;left:1605.5px;letter-spacing:0.05px;">CPU: 5.9%, 60.00 fps</div><svg style="left:480px;top:905px" width="70" height="255" viewBox="480 905 70 255"><path d="M531.3 915 Q532.6 912.6 534.1 915 L518.6 1116.6 L529.8 1113.4 L506 1151 L490 1109 L501 1113.6 Z" fill="#fb2f6e"/></svg><div class="" style="left:457.5px;top:1197.5px;width:87.6px;height:97.7px;border:6.2px solid #fb2f6e;border-radius:2.5px"></div>
</div></div>
</body>
</html>
